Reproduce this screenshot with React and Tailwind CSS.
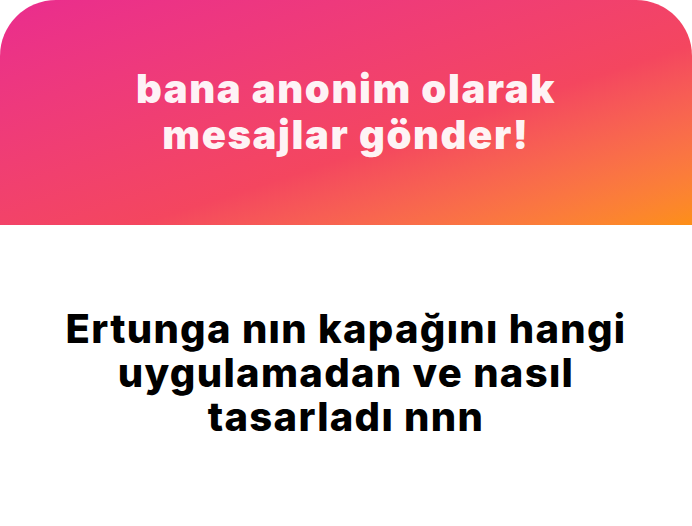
export default function App() {
  return (
    <div className="h-[526px] w-[692px] overflow-hidden bg-white" style={{ fontFamily: 'Inter, "Noto Sans", sans-serif' }}>
      <div className="flex h-[225px] items-center justify-center rounded-t-[56px] bg-linear-to-br from-[#ea2c8e] via-[#f4465f] via-60% to-[#fd8f15] pb-[2px]">
        <p className="text-center text-[40px] font-black leading-[46px] tracking-[1.6px] text-white/95">
          bana anonim olarak
          <br />
          mesajlar gönder!
        </p>
      </div>
      <div className="flex h-[301px] items-center justify-center pb-[6px]">
        <p className="text-center text-[40px] font-extrabold leading-[44px] tracking-[1.3px] text-black">
          Ertunga nın kapağını hangi
          <br />
          uygulamadan ve nasıl
          <br />
          tasarladı nnn
        </p>
      </div>
    </div>
  )
}
